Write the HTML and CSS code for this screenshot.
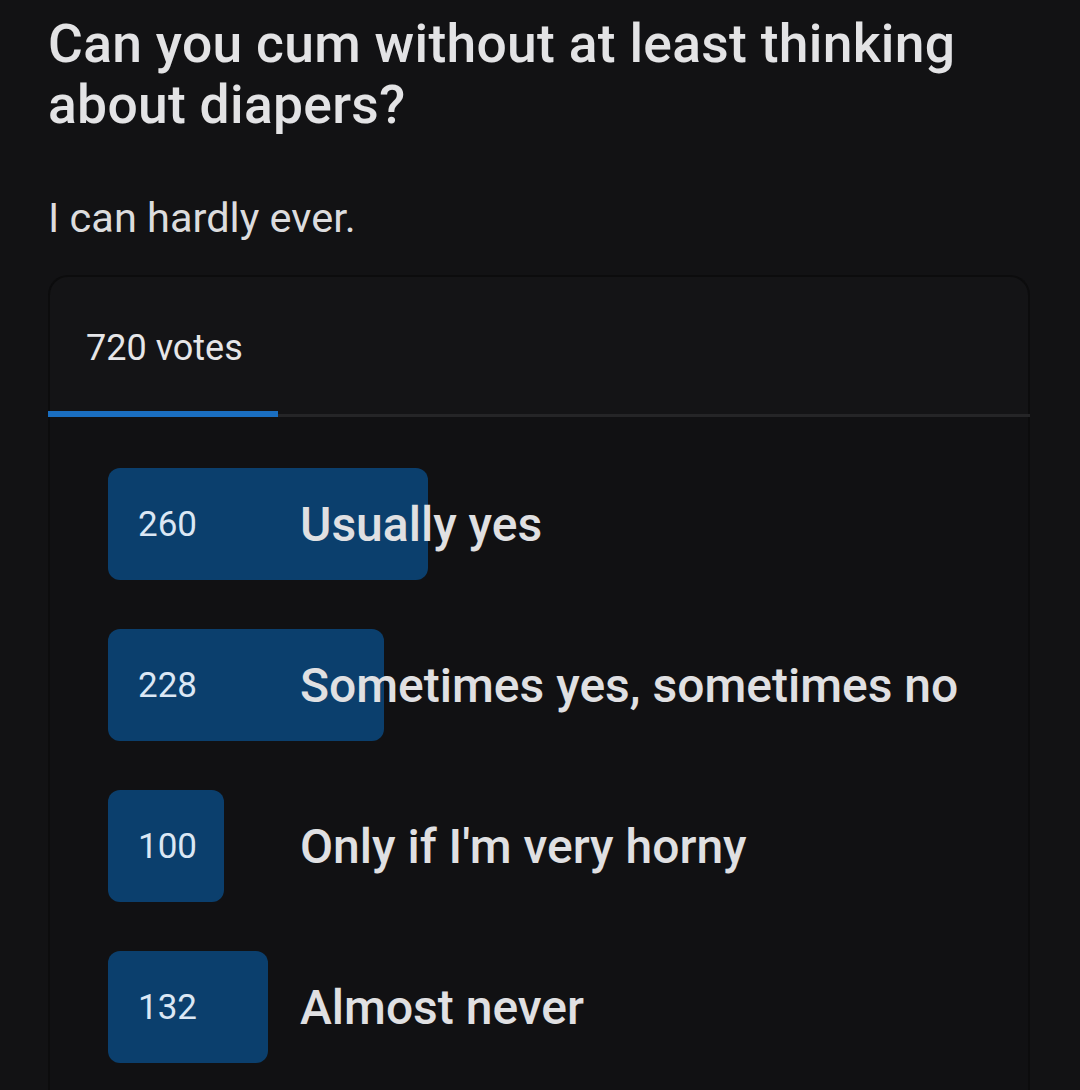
FILE: index.html
```html
<!DOCTYPE html>
<html lang="en">
<head>
  <meta charset="UTF-8">
  <title>Poll</title>
  <link rel="stylesheet" href="styles.css">
</head>
<body>
  <h1 class="title">Can you cum without at least thinking about diapers?</h1>
  <p class="body-text">I can hardly ever.</p>

  <div class="poll">
    <div class="poll-tabs">
      <div class="tab active">720 votes</div>
    </div>
    <ul class="options">
      <li class="option">
        <div class="bar" style="width: 320px"></div>
        <span class="count">260</span>
        <span class="label">Usually yes</span>
      </li>
      <li class="option">
        <div class="bar" style="width: 276px"></div>
        <span class="count">228</span>
        <span class="label">Sometimes yes, sometimes no</span>
      </li>
      <li class="option">
        <div class="bar" style="width: 116px"></div>
        <span class="count">100</span>
        <span class="label">Only if I'm very horny</span>
      </li>
      <li class="option">
        <div class="bar" style="width: 160px"></div>
        <span class="count">132</span>
        <span class="label">Almost never</span>
      </li>
    </ul>
  </div>
</body>
</html>
```

FILE: styles.css
```css
body {
  margin: 0;
  padding: 0 48px;
  background-color: #121214;
  color: #e3e3e5;
  font-family: Roboto, "Noto Sans", sans-serif;
  overflow: hidden;
}
.title {
  margin: 13px 0 0;
  font-size: 53.4px;
  font-weight: 500;
  line-height: 61px;
  letter-spacing: 0.3px;
  max-width: 960px;
}
.body-text {
  margin: 59px 0 0;
  font-size: 41.5px;
  line-height: 48px;
  color: #dcdcde;
}
/* Poll card */
.poll {
  margin-top: 33px;
  width: 982px;
  height: 900px;
  background-color: #141416;
  border: 2px solid #0c0c0d;
  border-bottom: none;
  border-radius: 20px 20px 0 0;
  box-sizing: border-box;
}
.poll-tabs {
  border-bottom: 3px solid #252527;
  margin: 0 -2px;
}
.tab {
  display: inline-block;
  width: 230px;
  box-sizing: border-box;
  padding: 50px 0 42px 38px;
  font-size: 36px;
  line-height: 42px;
  color: #e6e6e8;
  margin-bottom: -3px;
}
.tab.active { border-bottom: 6px solid #1a6ec0; }
.options {
  list-style: none;
  margin: 0;
  padding: 51px 0 0 58px;
  display: flex;
  flex-direction: column;
  gap: 49px;
  background-color: #111113;
  height: 100%;
}
.option {
  position: relative;
  display: flex;
  align-items: center;
  height: 112px;
}
.bar {
  position: absolute;
  left: 0;
  top: 0;
  height: 112px;
  background-color: #0b3f6d;
  border-radius: 12px;
}
.count {
  position: relative;
  width: 162px;
  padding-left: 30px;
  font-size: 35px;
  color: #dbe7f4;
}
.label {
  position: relative;
  font-size: 48px;
  font-weight: 500;
  color: #e0e0e2;
}
```
